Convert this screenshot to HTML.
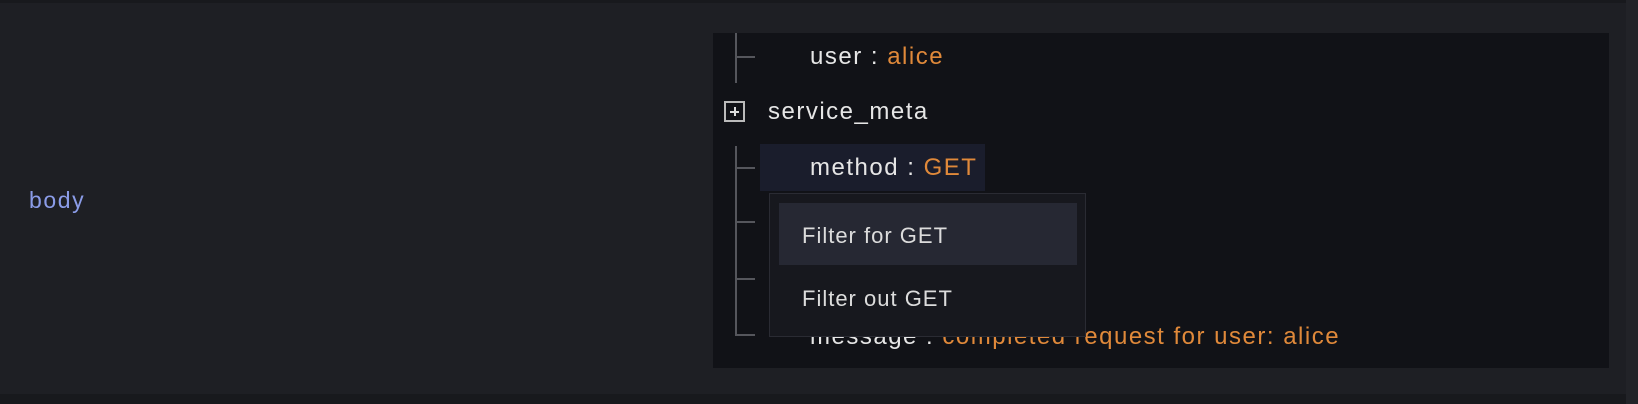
<!DOCTYPE html>
<html><head><meta charset="utf-8"><style>
html,body{margin:0;padding:0}
body{width:1638px;height:404px;background:#1e1f24;position:relative;overflow:hidden;font-family:"Liberation Sans",sans-serif}
.top{position:absolute;left:0;top:0;width:1638px;height:3px;background:#18191d}
.bot{position:absolute;left:0;top:394px;width:1638px;height:10px;background:#18191d}
.rside{position:absolute;left:1626px;top:0;width:12px;height:404px;background:#222328}
.lbl{position:absolute;left:29px;top:187px;color:#8b9ce8;font-size:23px;letter-spacing:1.6px}
.panel{position:absolute;left:713px;top:33px;width:896px;height:335px;background:#111217}
.t{position:absolute;font-size:24px;letter-spacing:1.5px;color:#e6e6e6;white-space:nowrap;line-height:1}
.o{color:#e0893a}
.v{position:absolute;background:#55565c;width:2px}
.h{position:absolute;background:#55565c;height:2px;width:20px}
.plus{position:absolute;left:724px;top:101px;width:21px;height:21px;border:2px solid #bbb;box-sizing:border-box}
.plus:before{content:"";position:absolute;left:4px;top:8px;width:9px;height:2px;background:#ddd}
.plus:after{content:"";position:absolute;left:8px;top:4px;width:2px;height:9px;background:#ddd}
.hl{position:absolute;left:760px;top:144px;width:225px;height:47px;background:#1a1d2c}
.menu{position:absolute;left:769px;top:193px;width:317px;height:144px;background:#17181e;border:1px solid #2a2b33;box-sizing:border-box}
.mi{position:absolute;left:9px;top:9px;width:298px;height:62px;background:#262833}
.mt{position:absolute;font-size:22px;letter-spacing:1px;color:#dcdcdc;white-space:nowrap;line-height:1}
</style></head><body>
<div class="top"></div><div class="bot"></div><div class="rside"></div>
<div class="lbl">body</div>
<div class="panel"></div>
<div class="v" style="left:735px;top:33px;height:50px"></div>
<div class="h" style="left:735px;top:56px"></div>
<div class="t" style="left:810px;top:45px">user : <span class="o">alice</span></div>
<div class="plus"></div>
<div class="t" style="left:768px;top:100px">service_meta</div>
<div class="v" style="left:735px;top:146px;height:190px"></div>
<div class="h" style="left:735px;top:167px"></div>
<div class="h" style="left:735px;top:221px"></div>
<div class="h" style="left:735px;top:278px"></div>
<div class="h" style="left:735px;top:334px"></div>
<div class="hl"></div>
<div class="t" style="left:810px;top:156px">method : <span class="o">GET</span></div>
<div class="t" style="left:810px;top:325px">message : <span class="o">completed request for user: alice</span></div>
<div class="menu"><div class="mi"></div>
<div class="mt" style="left:32px;top:31px">Filter for GET</div>
<div class="mt" style="left:32px;top:94px">Filter out GET</div>
</div>
</body></html>
